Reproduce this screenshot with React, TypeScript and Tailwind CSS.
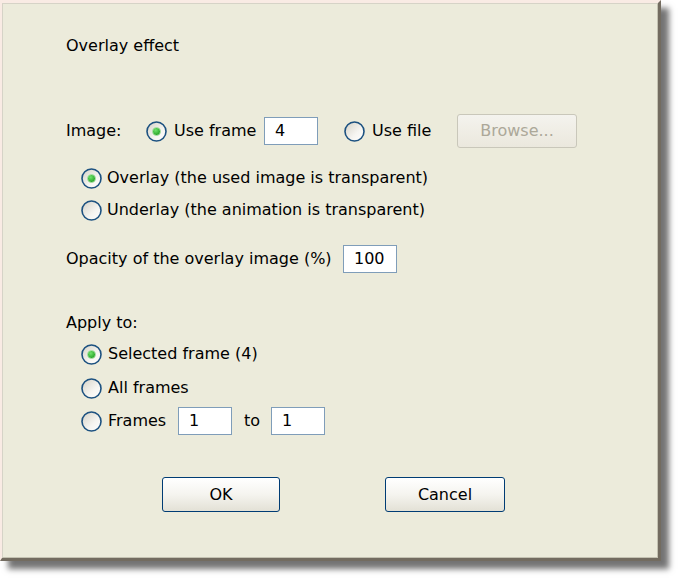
import React from "react";

const font = { fontFamily: '"DejaVu Sans", Verdana, sans-serif' };

function Radio({ checked = false }: { checked?: boolean }) {
  return (
    <svg width="21" height="21" viewBox="0 0 21 21" className="shrink-0">
      <defs>
        <linearGradient id="rg" x1="0" y1="0" x2="1" y2="1">
          <stop offset="0" stopColor="#d4d1c6" />
          <stop offset="0.6" stopColor="#f6f5f1" />
          <stop offset="1" stopColor="#ffffff" />
        </linearGradient>
        <radialGradient id="gd" cx="0.4" cy="0.35" r="0.7">
          <stop offset="0" stopColor="#6fe36a" />
          <stop offset="1" stopColor="#1e9a1e" />
        </radialGradient>
      </defs>
      <circle cx="10.5" cy="10.5" r="9.5" fill="url(#rg)" stroke="#1c5180" strokeWidth="1.6" />
      {checked && <circle cx="10.5" cy="10.5" r="4" fill="url(#gd)" stroke="#b6e7b2" strokeWidth="0.8" />}
    </svg>
  );
}

function Field({ value, w = "w-[54px]" }: { value: string; w?: string }) {
  return (
    <div className={`${w} h-[28px] border border-[#7f9db9] bg-white flex items-center pl-[10px] text-black`}>
      {value}
    </div>
  );
}

function XpButton({ label, w }: { label: string; w: string }) {
  return (
    <button
      className={`${w} h-[35px] rounded-[3px] border border-[#003c74] bg-gradient-to-b from-white via-[#f5f4ef] to-[#e3e1d6] text-[16px] text-black`}
      style={font}
    >
      {label}
    </button>
  );
}

export default function App() {
  return (
    <div className="w-[680px] h-[581px] bg-white overflow-hidden" style={font}>
      <div className="w-[661px] h-[561px] border-t-[3px] border-l-[2px] border-r-[3px] border-b-[3px] border-t-[#f9ebe4] border-l-[#f9ebe4] border-r-[#736c60] border-b-[#736c60] shadow-[8px_8px_6px_rgba(0,0,0,0.55)]">
        <div className="w-full h-full border border-t-[#d6d3c7] border-l-[#d6d3c7] border-r-[#c4c2b2] border-b-[#c4c2b2] bg-[#ecebdb] text-[16px] text-black pl-[63px] flex flex-col">
          <div className="mt-[32px] h-[20px] leading-[20px]">Overlay effect</div>

          <div className="mt-[58px] h-[34px] flex items-center">
            <span className="w-[80px]">Image:</span>
            <div className="w-[118px] flex items-center gap-[7px]">
              <Radio checked />
              <span>Use frame</span>
            </div>
            <Field value="4" />
            <div className="ml-[26px] w-[113px] flex items-center gap-[7px]">
              <Radio />
              <span>Use file</span>
            </div>
            <div className="w-[120px] h-[34px] rounded-[3px] border border-[#c9c7ba] bg-gradient-to-b from-[#f4f3ee] to-[#ebe8dd] flex items-center justify-center text-[#aca899]">
              Browse...
            </div>
          </div>

          <div className="mt-[19px] ml-[15px] h-[22px] flex items-center gap-[5px]">
            <Radio checked />
            <span>Overlay (the used image is transparent)</span>
          </div>
          <div className="mt-[10px] ml-[15px] h-[22px] flex items-center gap-[5px]">
            <Radio />
            <span>Underlay (the animation is transparent)</span>
          </div>

          <div className="mt-[24px] h-[28px] flex items-center">
            <span className="w-[277px]">Opacity of the overlay image (%)</span>
            <Field value="100" />
          </div>

          <div className="mt-[40px] h-[20px] leading-[20px]">Apply to:</div>

          <div className="mt-[10px] ml-[15px] h-[22px] flex items-center gap-[6px]">
            <Radio checked />
            <span>Selected frame (4)</span>
          </div>
          <div className="mt-[12px] ml-[15px] h-[22px] flex items-center gap-[6px]">
            <Radio />
            <span>All frames</span>
          </div>
          <div className="mt-[8px] ml-[15px] h-[28px] flex items-center">
            <div className="w-[97px] flex items-center gap-[6px]">
              <Radio />
              <span>Frames</span>
            </div>
            <Field value="1" />
            <span className="ml-[12px] w-[27px]">to</span>
            <Field value="1" />
          </div>

          <div className="mt-[42px] h-[35px] flex items-center">
            <div className="ml-[96px]">
              <XpButton label="OK" w="w-[118px]" />
            </div>
            <div className="ml-[105px]">
              <XpButton label="Cancel" w="w-[120px]" />
            </div>
          </div>
        </div>
      </div>
    </div>
  );
}
